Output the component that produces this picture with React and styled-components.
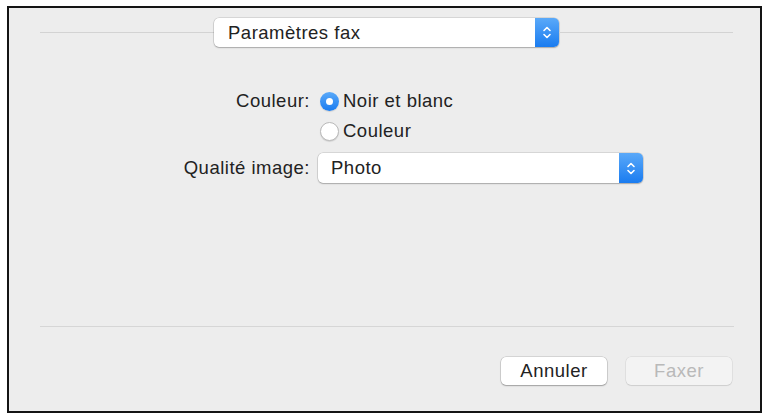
import React from 'react'
import styled, { createGlobalStyle } from 'styled-components'

const GlobalStyle = createGlobalStyle`
    body {
        margin: 0;
        background: #ffffff;
        font-family: "Liberation Sans", Arial, sans-serif;
    }
`

const Page = styled.div`
    padding: 6px 0 0 7px;
`

const Dialog = styled.div`
    box-sizing: border-box;
    width: 755px;
    height: 407px;
    border: 2px solid #141414;
    background: #ededed;
    display: flex;
    flex-direction: column;
    color: #222222;
    font-size: 18.5px;
    letter-spacing: 0.5px;
`

const Header = styled.div`
    display: flex;
    align-items: center;
    padding: 10px 27px 0 31px;
`

const Rule = styled.div`
    flex: 1;
    height: 1px;
    background: #d3d3d3;
`

const Separator = styled.div`
    height: 1px;
    background: #d6d6d6;
    margin: 0 26px 0 31px;
`

const Popup = styled.div`
    box-sizing: border-box;
    width: ${p => p.$width}px;
    height: ${p => p.$height}px;
    display: flex;
    align-items: stretch;
    background: #ffffff;
    border-radius: 5px;
    box-shadow: 0 0 0 0.5px rgba(0, 0, 0, 0.18), 0 1px 1.5px rgba(0, 0, 0, 0.22);
`

const PopupLabel = styled.span`
    flex: 1;
    display: flex;
    align-items: center;
    padding-left: ${p => p.$indent}px;
`

const Stepper = styled.span`
    width: 24px;
    display: flex;
    align-items: center;
    justify-content: center;
    border-radius: 0 5px 5px 0;
    background: linear-gradient(#5aa9f9, #1a7cf0);
`

const Form = styled.div`
    flex: 1;
    display: grid;
    grid-template-columns: 301px auto;
    column-gap: 8px;
    row-gap: 7px;
    align-content: start;
    padding-top: 39px;
`

const Label = styled.div`
    text-align: right;
    line-height: 30px;
`

const RadioGroup = styled.div`
    display: flex;
    flex-direction: column;
`

const RadioRow = styled.label`
    height: 30px;
    display: flex;
    align-items: center;
    gap: 4px;
    padding-left: 2px;
`

const RadioDot = styled.span`
    box-sizing: border-box;
    width: 19px;
    height: 19px;
    border-radius: 50%;
    display: flex;
    align-items: center;
    justify-content: center;
    background: ${p => p.$checked ? 'linear-gradient(#5aa9f9, #1a7cf0)' : '#ffffff'};
    border: ${p => p.$checked ? 'none' : '1px solid #b9b9b9'};
    box-shadow: 0 1px 1px rgba(0, 0, 0, 0.12);

    &::after {
        content: '';
        width: 7px;
        height: 7px;
        border-radius: 50%;
        background: #ffffff;
        display: ${p => p.$checked ? 'block' : 'none'};
    }
`

const Footer = styled.div`
    display: flex;
    justify-content: flex-end;
    gap: 19px;
    padding: 30px 28px 26px;
`

const Button = styled.button`
    box-sizing: border-box;
    width: 106px;
    height: 28px;
    border-radius: 5px;
    font-family: inherit;
    font-size: 18.5px;
    letter-spacing: 0.5px;
    border: none;
    background: ${p => p.disabled ? '#f3f3f3' : '#ffffff'};
    color: ${p => p.disabled ? '#b9b9b9' : '#222222'};
    box-shadow: ${p => p.disabled
        ? '0 0 0 0.5px rgba(0, 0, 0, 0.1), 0 1px 1px rgba(0, 0, 0, 0.08)'
        : '0 0 0 0.5px rgba(0, 0, 0, 0.2), 0 1px 1.5px rgba(0, 0, 0, 0.25)'};
`

const Arrows = () => (
    <svg width="10" height="15" viewBox="0 0 10 15" fill="none" stroke="#ffffff" strokeWidth="1.6" strokeLinecap="round" strokeLinejoin="round">
        <path d="M2 5.5 L5 2.5 L8 5.5" />
        <path d="M2 9.5 L5 12.5 L8 9.5" />
    </svg>
)

const Select = ({ width, height, indent, children }) => (
    <Popup $width={width} $height={height}>
        <PopupLabel $indent={indent}>{children}</PopupLabel>
        <Stepper><Arrows /></Stepper>
    </Popup>
)

export default function App() {
    return (
        <Page>
            <GlobalStyle />
            <Dialog>
                <Header>
                    <Rule />
                    <Select width={345} height={29} indent={14}>Paramètres fax</Select>
                    <Rule />
                </Header>
                <Form>
                    <Label>Couleur:</Label>
                    <RadioGroup>
                        <RadioRow><RadioDot $checked />Noir et blanc</RadioRow>
                        <RadioRow><RadioDot />Couleur</RadioRow>
                    </RadioGroup>
                    <Label>Qualité image:</Label>
                    <Select width={325} height={30} indent={13}>Photo</Select>
                </Form>
                <Separator />
                <Footer>
                    <Button>Annuler</Button>
                    <Button disabled>Faxer</Button>
                </Footer>
            </Dialog>
        </Page>
    )
}
